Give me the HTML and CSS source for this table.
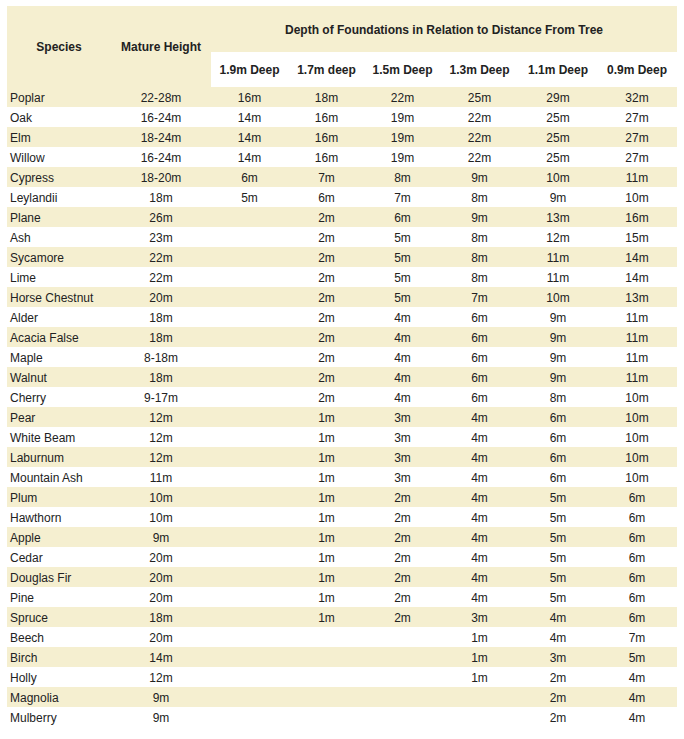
FILE: index.html
```html
<!DOCTYPE html>
<html>
<head>
<meta charset="utf-8">
<link rel="stylesheet" href="styles.css">
</head>
<body>
<table class="trees">
<colgroup>
<col class="c-species"><col class="c-height"><col class="c-d1"><col class="c-d2"><col class="c-d3"><col class="c-d4"><col class="c-d5"><col class="c-d6">
</colgroup>
<thead>
<tr class="h1">
<th rowspan="2">Species</th>
<th rowspan="2">Mature Height</th>
<th colspan="6">Depth of Foundations in Relation to Distance From Tree</th>
</tr>
<tr class="h2">
<th>1.9m Deep</th><th>1.7m deep</th><th>1.5m Deep</th><th>1.3m Deep</th><th>1.1m Deep</th><th>0.9m Deep</th>
</tr>
</thead>
<tbody>
<tr><td>Poplar</td><td>22-28m</td><td>16m</td><td>18m</td><td>22m</td><td>25m</td><td>29m</td><td>32m</td></tr>
<tr><td>Oak</td><td>16-24m</td><td>14m</td><td>16m</td><td>19m</td><td>22m</td><td>25m</td><td>27m</td></tr>
<tr><td>Elm</td><td>18-24m</td><td>14m</td><td>16m</td><td>19m</td><td>22m</td><td>25m</td><td>27m</td></tr>
<tr><td>Willow</td><td>16-24m</td><td>14m</td><td>16m</td><td>19m</td><td>22m</td><td>25m</td><td>27m</td></tr>
<tr><td>Cypress</td><td>18-20m</td><td>6m</td><td>7m</td><td>8m</td><td>9m</td><td>10m</td><td>11m</td></tr>
<tr><td>Leylandii</td><td>18m</td><td>5m</td><td>6m</td><td>7m</td><td>8m</td><td>9m</td><td>10m</td></tr>
<tr><td>Plane</td><td>26m</td><td></td><td>2m</td><td>6m</td><td>9m</td><td>13m</td><td>16m</td></tr>
<tr><td>Ash</td><td>23m</td><td></td><td>2m</td><td>5m</td><td>8m</td><td>12m</td><td>15m</td></tr>
<tr><td>Sycamore</td><td>22m</td><td></td><td>2m</td><td>5m</td><td>8m</td><td>11m</td><td>14m</td></tr>
<tr><td>Lime</td><td>22m</td><td></td><td>2m</td><td>5m</td><td>8m</td><td>11m</td><td>14m</td></tr>
<tr><td>Horse Chestnut</td><td>20m</td><td></td><td>2m</td><td>5m</td><td>7m</td><td>10m</td><td>13m</td></tr>
<tr><td>Alder</td><td>18m</td><td></td><td>2m</td><td>4m</td><td>6m</td><td>9m</td><td>11m</td></tr>
<tr><td>Acacia False</td><td>18m</td><td></td><td>2m</td><td>4m</td><td>6m</td><td>9m</td><td>11m</td></tr>
<tr><td>Maple</td><td>8-18m</td><td></td><td>2m</td><td>4m</td><td>6m</td><td>9m</td><td>11m</td></tr>
<tr><td>Walnut</td><td>18m</td><td></td><td>2m</td><td>4m</td><td>6m</td><td>9m</td><td>11m</td></tr>
<tr><td>Cherry</td><td>9-17m</td><td></td><td>2m</td><td>4m</td><td>6m</td><td>8m</td><td>10m</td></tr>
<tr><td>Pear</td><td>12m</td><td></td><td>1m</td><td>3m</td><td>4m</td><td>6m</td><td>10m</td></tr>
<tr><td>White Beam</td><td>12m</td><td></td><td>1m</td><td>3m</td><td>4m</td><td>6m</td><td>10m</td></tr>
<tr><td>Laburnum</td><td>12m</td><td></td><td>1m</td><td>3m</td><td>4m</td><td>6m</td><td>10m</td></tr>
<tr><td>Mountain Ash</td><td>11m</td><td></td><td>1m</td><td>3m</td><td>4m</td><td>6m</td><td>10m</td></tr>
<tr><td>Plum</td><td>10m</td><td></td><td>1m</td><td>2m</td><td>4m</td><td>5m</td><td>6m</td></tr>
<tr><td>Hawthorn</td><td>10m</td><td></td><td>1m</td><td>2m</td><td>4m</td><td>5m</td><td>6m</td></tr>
<tr><td>Apple</td><td>9m</td><td></td><td>1m</td><td>2m</td><td>4m</td><td>5m</td><td>6m</td></tr>
<tr><td>Cedar</td><td>20m</td><td></td><td>1m</td><td>2m</td><td>4m</td><td>5m</td><td>6m</td></tr>
<tr><td>Douglas Fir</td><td>20m</td><td></td><td>1m</td><td>2m</td><td>4m</td><td>5m</td><td>6m</td></tr>
<tr><td>Pine</td><td>20m</td><td></td><td>1m</td><td>2m</td><td>4m</td><td>5m</td><td>6m</td></tr>
<tr><td>Spruce</td><td>18m</td><td></td><td>1m</td><td>2m</td><td>3m</td><td>4m</td><td>6m</td></tr>
<tr><td>Beech</td><td>20m</td><td></td><td></td><td></td><td>1m</td><td>4m</td><td>7m</td></tr>
<tr><td>Birch</td><td>14m</td><td></td><td></td><td></td><td>1m</td><td>3m</td><td>5m</td></tr>
<tr><td>Holly</td><td>12m</td><td></td><td></td><td></td><td>1m</td><td>2m</td><td>4m</td></tr>
<tr><td>Magnolia</td><td>9m</td><td></td><td></td><td></td><td></td><td>2m</td><td>4m</td></tr>
<tr><td>Mulberry</td><td>9m</td><td></td><td></td><td></td><td></td><td>2m</td><td>4m</td></tr>
</tbody>
</table>
</body>
</html>
```
FILE: styles.css
```css
html, body {
  margin: 0;
  padding: 0;
  background: #ffffff;
}
body {
  padding: 6px 7px;
  font-family: "Liberation Sans", Arial, sans-serif;
  font-size: 12px;
  color: #222222;
}
.trees {
  border-collapse: collapse;
  table-layout: fixed;
  width: 670px;
}
.c-species { width: 104px; }
.c-height { width: 100px; }
.c-d1 { width: 77px; }
.c-d2 { width: 77px; }
.c-d3 { width: 75px; }
.c-d4 { width: 79px; }
.c-d5 { width: 78px; }
.c-d6 { width: 80px; }
.trees th {
  font-weight: bold;
  text-align: center;
  padding: 1px 0 0;
  line-height: 14px;
  background: #f5efd0;
}
.trees .h1 th { height: 45px; }
.trees .h2 th { height: 34px; background: #ffffff; }
.trees td {
  height: 19px;
  padding: 1px 0 0;
  text-align: center;
  line-height: 14px;
}
.trees td:first-child {
  text-align: left;
  padding-left: 3px;
}
.trees tbody tr:nth-child(odd) td { background: #f5efd0; }
```
